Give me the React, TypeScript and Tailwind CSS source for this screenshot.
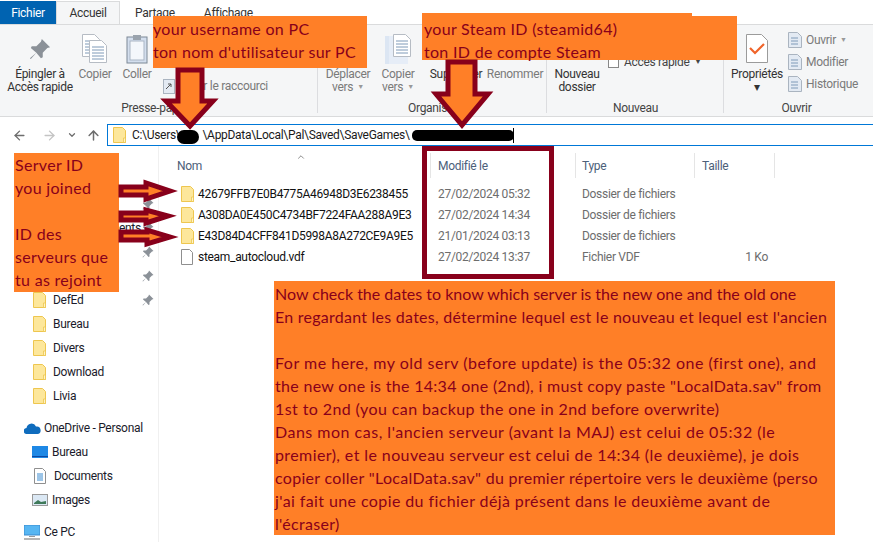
import React from "react";
import { ArrowLeft, ArrowRight, ArrowUp, ChevronDown, ChevronUp } from "lucide-react";

const Folder = ({ className = "" }: { className?: string }) => (
  <svg viewBox="0 0 13 16" width="13" height="16" className={className}>
    <path d="M.5.5h9l3 3v12H.5z" fill="#fde79b" stroke="#eec64f" />
    <path d="M10.5 11h2v4.5h-2z" fill="#fff3c4" stroke="#eec64f" strokeWidth=".8" />
  </svg>
);

const Pin = ({ color = "#8b9198", size = 12 }: { color?: string; size?: number }) => (
  <svg viewBox="0 0 24 24" width={size} height={size}>
    <path d="M14 1l9 9-3 1-5 5 0 5-2 1-5-6-6 7-1-1 7-6-6-5 1-2 5 0 5-5z" fill={color} />
  </svg>
);

const Doc = ({ x = 0, y = 0 }: { x?: number; y?: number }) => (
  <g transform={`translate(${x} ${y})`}>
    <path d="M.5.5h12l5 5v17H.5z" fill="#fff" stroke="#b6bcc4" />
    <path d="M3 7h12M3 10h12M3 13h12M3 16h12M3 19h12" stroke="#7f9ab8" strokeWidth="1" />
  </g>
);

const CopyIcon = () => (
  <svg width="26" height="30" viewBox="0 0 26 30"><Doc x={0} y={0} /><Doc x={7} y={6} /></svg>
);
const PasteIcon = () => (
  <svg width="22" height="30" viewBox="0 0 22 30">
    <rect x="1" y="3" width="20" height="26" fill="#d4dfee" stroke="#7d8896" />
    <rect x="4" y="7" width="14" height="19" fill="#f4f7fb" stroke="#a9b5c4" />
    <rect x="7" y="1" width="8" height="5" fill="#9aa3ad" />
  </svg>
);
const MoveIcon = () => (
  <svg width="26" height="30" viewBox="0 0 26 30">
    <rect x="0" y="2" width="23" height="28" fill="#dce6f3" />
    <rect x="4" y="2" width="19" height="28" fill="#e6edf7" />
    <Doc x={8} y={0} />
  </svg>
);
const PropsIcon = () => (
  <svg width="22" height="29" viewBox="0 0 22 29">
    <path d="M.5.5h15l6 6v22H.5z" fill="#fff" stroke="#9b9b9b" />
    <path d="M4 14l5 5 9-9" fill="none" stroke="#f0642a" strokeWidth="2.2" />
  </svg>
);

const Big = ({ w, lines, dark, icon, caret, className = "" }: { w: string; lines: string[]; dark?: boolean; icon: React.ReactNode; caret?: boolean; className?: string }) => (
  <div className={`${w} ${className} flex flex-col items-center shrink-0 ${dark ? "text-[#333333]" : "text-[#7a7a7a]"}`}>
    <div className="h-[39px] flex items-center justify-center">{icon}</div>
    {lines.map((l, i) => (
      <div key={i} className="leading-[13px] whitespace-nowrap">
        {l}
        {caret && i === lines.length - 1 ? <span className="ml-1 text-[7px] align-middle text-[#999999]">▼</span> : null}
      </div>
    ))}
  </div>
);

const Group = ({ w, label, children }: { w: string; label: string; children: React.ReactNode }) => (
  <div className={`${w} shrink-0 relative flex flex-col pt-[4px] pb-[1px]`}>
    <div className="flex-1 flex">{children}</div>
    <div className="text-center text-[#444444] leading-[14px]">{label}</div>
    <div className="absolute right-0 top-[5px] bottom-[3px] w-px bg-[#dcdde0]" />
  </div>
);

const Row = ({ icon, label, pin, pl, mt }: { icon: React.ReactNode; label: string; pin?: boolean; pl: string; mt?: string }) => (
  <div className={`h-6 flex items-center relative whitespace-nowrap ${pl} ${mt ?? ""}`}>
    <div className="w-[20px] flex items-center shrink-0">{icon}</div>
    <span>{label}</span>
    {pin ? <div className="absolute left-[142px] top-[6px]"><Pin /></div> : null}
  </div>
);

const FileRow = ({ name, date, type, size, file }: { name: string; date: string; type: string; size?: string; file?: boolean }) => (
  <div className="h-[21px] flex items-center whitespace-nowrap">
    <div className="w-[17px] ml-[22px] shrink-0 flex">
      {file ? (
        <svg width="12" height="16" viewBox="0 0 12 16"><path d="M.5.5h8l3 3v12H.5z" fill="#fff" stroke="#8f8f8f" /></svg>
      ) : (
        <Folder />
      )}
    </div>
    <div className="w-[240px] shrink-0 text-[#111111]">{name}</div>
    <div className="w-[144px] shrink-0 text-[#6d6d6d]">{date}</div>
    <div className="w-[120px] shrink-0 text-[#6d6d6d]">{type}</div>
    <div className="w-[66px] shrink-0 text-right text-[#6d6d6d]">{size}</div>
  </div>
);

type Line = string | [string, string];

const Note = ({ className, lines }: { className: string; lines: Line[] }) => (
  <div className={`absolute bg-[#ff7f27] text-[#88001b] text-[16px] leading-[23px] tracking-[0.3px] font-['Comic_Sans_MS','Lato',cursive] whitespace-pre ${className}`}>
    {lines.map((l, i) =>
      typeof l === "string" ? (
        <div key={i} className="h-[23px]">{l}</div>
      ) : (
        <div key={i} className={`h-[23px] ${l[1]}`}>{l[0]}</div>
      )
    )}
  </div>
);

const ArrowShape = ({ points }: { points: string }) => (
  <polygon points={points} fill="#ff7f27" stroke="#88001b" strokeWidth="5" strokeLinejoin="miter" />
);

export default function App() {
  return (
    <div className="relative w-[873px] h-[542px] overflow-hidden bg-white text-[12px] tracking-[-0.3px] font-['Roboto',sans-serif]">
      {/* tabs */}
      <div className="h-6 flex items-end text-[#333333]">
        <div className="w-14 h-[23px] bg-[#0063b1] text-white flex items-center justify-center">Fichier</div>
        <div className="w-16 h-[23px] bg-[#f5f6f7] border border-b-0 border-[#dadbdc] flex items-center justify-center">Accueil</div>
        <div className="ml-[15px] h-[23px] flex items-center">Partage</div>
        <div className="ml-[29px] h-[23px] flex items-center">Affichage</div>
      </div>

      {/* ribbon */}
      <div className="h-[93px] bg-[#f5f6f7] border-b border-t border-[#dadbdc] flex">
        <Group w="w-[318px]" label="Presse-papiers">
          <Big w="w-[70px]" className="ml-[5px]" dark lines={["Épingler à", "Accès rapide"]} icon={<Pin size={22} />} />
          <Big w="w-[40px]" lines={["Copier"]} icon={<CopyIcon />} />
          <Big w="w-[40px]" className="ml-[2px]" lines={["Coller"]} icon={<PasteIcon />} />
          <div className="ml-[6px] mt-[47px] flex items-center text-[#7a7a7a] whitespace-nowrap h-[20px] gap-[3px]">
            <svg width="12" height="15" viewBox="0 0 12 15"><rect x=".5" y=".5" width="11" height="14" fill="#e3eaf3" stroke="#aab4c0" /><path d="M3 10l5-5M5 5h3v3" fill="none" stroke="#555555" /></svg>
            <span>Coller le raccourci</span>
          </div>
        </Group>
        <Group w="w-[229px]" label="Organiser">
          <Big w="w-[50px]" className="ml-[5px]" lines={["Déplacer", "vers"]} caret icon={<MoveIcon />} />
          <Big w="w-[44px]" className="ml-[3px]" lines={["Copier", "vers"]} caret icon={<MoveIcon />} />
          <Big w="w-[54px]" className="ml-[9px]" dark lines={["Supprimer"]} icon={null} />
          <Big w="w-[54px]" className="ml-[5px]" lines={["Renommer"]} icon={null} />
        </Group>
        <Group w="w-[177px]" label="Nouveau">
          <Big w="w-[50px]" className="ml-[5px]" dark lines={["Nouveau", "dossier"]} icon={null} />
          <div className="ml-[6px] mt-[25px] h-[16px] flex items-center gap-[5px] text-[#444444] whitespace-nowrap">
            <div className="w-[11px] h-[11px] border border-[#888888] bg-white" />
            <span>Accès rapide</span>
            <span className="text-[7px]">▼</span>
          </div>
        </Group>
        <div className="flex-1 relative flex flex-col pt-[4px] pb-[1px]">
          <div className="flex-1 flex">
            <Big w="w-[56px]" className="ml-[5px]" dark lines={["Propriétés", "▾"]} icon={<PropsIcon />} />
            <div className="ml-[3px] pt-[3px] text-[#7a7a7a] flex flex-col gap-[6px]">
              {["Ouvrir", "Modifier", "Historique"].map((t, i) => (
                <div key={t} className="h-[16px] flex items-center gap-[4px] whitespace-nowrap">
                  <svg width="14" height="16" viewBox="0 0 14 16"><path d="M.5.5h9l4 4v11H.5z" fill="#e3eaf3" stroke="#aab4c0" /><path d="M3 6h7M3 9h7M3 12h7" stroke="#7f9ab8" /></svg>
                  <span>{t}</span>
                  {i === 0 ? <span className="text-[7px] text-[#999999]">▼</span> : null}
                </div>
              ))}
            </div>
          </div>
          <div className="w-[145px] text-center text-[#444444] leading-[14px]">Ouvrir</div>
        </div>
      </div>

      {/* address */}
      <div className="h-[29px] flex items-end">
        <div className="w-[107px] h-[22px] shrink-0 flex items-center pl-[12px] text-[#6e6e6e]">
          <ArrowLeft size={15} strokeWidth={2.2} />
          <ArrowRight size={15} strokeWidth={2.2} className="ml-[15px] text-[#c4c4c4]" />
          <ChevronDown size={10} strokeWidth={3} className="ml-[10px]" />
          <ArrowUp size={15} strokeWidth={2.4} className="ml-[9px]" />
        </div>
        <div className="flex-1 h-[22px] border-y border-l border-[#0078d7] flex items-center pl-[5px] whitespace-nowrap text-[#1a1a1a]">
          <Folder className="mr-[6px]" />
          <span>C:\Users\</span>
          <span className="w-[22px]" />
          <span>\AppData\Local\Pal\Saved\SaveGames\</span>
          <span className="ml-[103px] w-px h-[15px] bg-black" />
        </div>
      </div>

      {/* body */}
      <div className="flex h-[397px]">
        <div className="w-[159px] shrink-0 border-r border-[#f0f0f0] pt-[22px] text-[#1b1b2b]">
          <Row pl="pl-[25px]" icon={<Pin size={12} />} label="Accès rapide" />
          <Row pl="pl-[33px]" pin icon={<Folder />} label="Bureau" />
          <Row pl="pl-[33px]" pin icon={<Folder />} label="Téléchargements" />
          <Row pl="pl-[33px]" pin icon={<Folder />} label="Documents" />
          <Row pl="pl-[33px]" pin icon={<Folder />} label="Images" />
          <Row pl="pl-[33px]" pin icon={<Folder />} label="DefEd" />
          <Row pl="pl-[33px]" icon={<Folder />} label="Bureau" />
          <Row pl="pl-[33px]" icon={<Folder />} label="Divers" />
          <Row pl="pl-[33px]" icon={<Folder />} label="Download" />
          <Row pl="pl-[33px]" icon={<Folder />} label="Livia" />
          <Row pl="pl-[24px]" mt="mt-2" icon={
            <svg width="17" height="11" viewBox="0 0 17 11"><path d="M3 11a3 3 0 0 1-.5-6A5 5 0 0 1 12 3.5 3.8 3.8 0 0 1 13.5 11z" fill="#0f6cbd" /></svg>
          } label="OneDrive - Personal" />
          <Row pl="pl-[32px]" icon={
            <svg width="16" height="12" viewBox="0 0 16 12"><rect width="16" height="12" fill="#1e88e5" /><rect y="10" width="16" height="1" fill="#0d47a1" /></svg>
          } label="Bureau" />
          <Row pl="pl-[34px]" icon={
            <svg width="12" height="16" viewBox="0 0 12 16"><path d="M.5.5h8l3 3v12H.5z" fill="#fff" stroke="#8f8f8f" /><path d="M3 6h6M3 8h6M3 10h6M3 12h6" stroke="#3b8bd0" /></svg>
          } label="Documents" />
          <Row pl="pl-[32px]" icon={
            <svg width="16" height="12" viewBox="0 0 16 12"><rect x=".5" y=".5" width="15" height="11" fill="#dbe8f4" stroke="#999999" /><path d="M2 9l4-3 3 2 5-1v3H2z" fill="#3f7a5a" /></svg>
          } label="Images" />
          <Row pl="pl-[24px]" mt="mt-2" icon={
            <svg width="16" height="15" viewBox="0 0 16 15"><rect width="16" height="10" fill="#57b6f2" stroke="#3b8bd0" /><rect x="5" y="11" width="6" height="1" fill="#9a9a9a" /><rect x="0" y="13" width="16" height="2" fill="#b5b5b5" /></svg>
          } label="Ce PC" />
        </div>

        <div className="flex-1 min-w-0 pt-[7px]">
          <div className="relative h-[25px] flex items-center text-[#4c607a] whitespace-nowrap">
            <span className="ml-[18px] w-[261px]">Nom</span>
            <span className="w-[144px]">Modifié le</span>
            <span className="w-[120px]">Type</span>
            <span>Taille</span>
            <ChevronUp size={10} className="absolute left-[137px] -top-[1px] text-[#777777]" />
            <div className="absolute left-[271px] top-0 bottom-0 w-px bg-[#e5e5e5]" />
            <div className="absolute left-[416px] top-0 bottom-0 w-px bg-[#e5e5e5]" />
            <div className="absolute left-[535px] top-0 bottom-0 w-px bg-[#e5e5e5]" />
            <div className="absolute left-[615px] top-0 bottom-0 w-px bg-[#e5e5e5]" />
          </div>
          <div className="pt-[5px]">
            <FileRow name="42679FFB7E0B4775A46948D3E6238455" date="27/02/2024 05:32" type="Dossier de fichiers" />
            <FileRow name="A308DA0E450C4734BF7224FAA288A9E3" date="27/02/2024 14:34" type="Dossier de fichiers" />
            <FileRow name="E43D84D4CFF841D5998A8A272CE9A9E5" date="21/01/2024 03:13" type="Dossier de fichiers" />
            <FileRow file name="steam_autocloud.vdf" date="27/02/2024 13:37" type="Fichier VDF" size="1 Ko" />
          </div>
        </div>
      </div>

      {/* annotations drawn over the capture */}
      <div className="absolute left-[177px] top-[130px] w-[22px] h-[14px] rounded-full bg-black" />
      <div className="absolute left-[412px] top-[130px] w-[102px] h-[11px] rounded-[5px] bg-black" />
      <div className="absolute left-[422px] top-[146px] w-[132px] h-[133px] border-[5px] border-[#88001b]" />

      <div className="absolute left-[422px] top-[13px] w-[270px] h-[47px] bg-[#ff7f27]" />
      <Note className="left-[153px] top-[16px] w-[214px] h-[52px] pt-[1px]" lines={["your username on PC", "ton nom d'utilisateur sur PC"]} />
      <Note className="left-[422px] top-[16px] w-[315px] h-[44px] pt-[1px] pl-[2px]" lines={["your Steam ID (steamid64)", "ton ID de compte Steam"]} />
      <Note className="left-[14px] top-[153px] w-[105px] h-[139px] pl-[1px]" lines={["Server ID", "you joined", "", "ID des", "serveurs que", "tu as rejoint"]} />
      <Note className="left-[274px] top-[281px] w-[561px] h-[254px] pt-[1px] pl-[1px]" lines={[
        ["Now check the dates to know which server is the new one and the old one", "tracking-[0px]"],
        ["En regardant les dates, détermine lequel est le nouveau et lequel est l'ancien", "tracking-[0.25px]"],
        "",
        ["For me here, my old serv (before update) is the 05:32 one (first one), and", "tracking-[0.5px]"],
        "the new one is the 14:34 one (2nd), i must copy paste \"LocalData.sav\" from",
        ["1st to 2nd (you can backup the one in 2nd before overwrite)", "tracking-[0.4px]"],
        ["Dans mon cas, l'ancien serveur (avant la MAJ) est celui de 05:32 (le", "tracking-[0.5px]"],
        ["premier), et le nouveau serveur est celui de 14:34 (le deuxième), je dois", "tracking-[0.4px]"],
        "copier coller \"LocalData.sav\" du premier répertoire vers le deuxième (perso",
        ["j'ai fait une copie du fichier déjà présent dans le deuxième avant de", "tracking-[0.4px]"],
        "l'écraser)",
      ]} />

      <svg className="absolute left-0 top-0" width="873" height="542" viewBox="0 0 873 542">
        <ArrowShape points="178,70 202,70 202,101 213,101 190,126 166,101 178,101" />
        <ArrowShape points="448,62 475,62 475,94 488,94 462,125 436,94 448,94" />
        <ArrowShape points="121,187 146,187 146,183 170,191 146,199 146,195 121,195" />
        <ArrowShape points="121,213 146,213 146,210 168,216 146,223 146,220 121,220" />
        <ArrowShape points="121,232 147,232 147,230 170,237 147,244 147,240 121,240" />
      </svg>
    </div>
  );
}
